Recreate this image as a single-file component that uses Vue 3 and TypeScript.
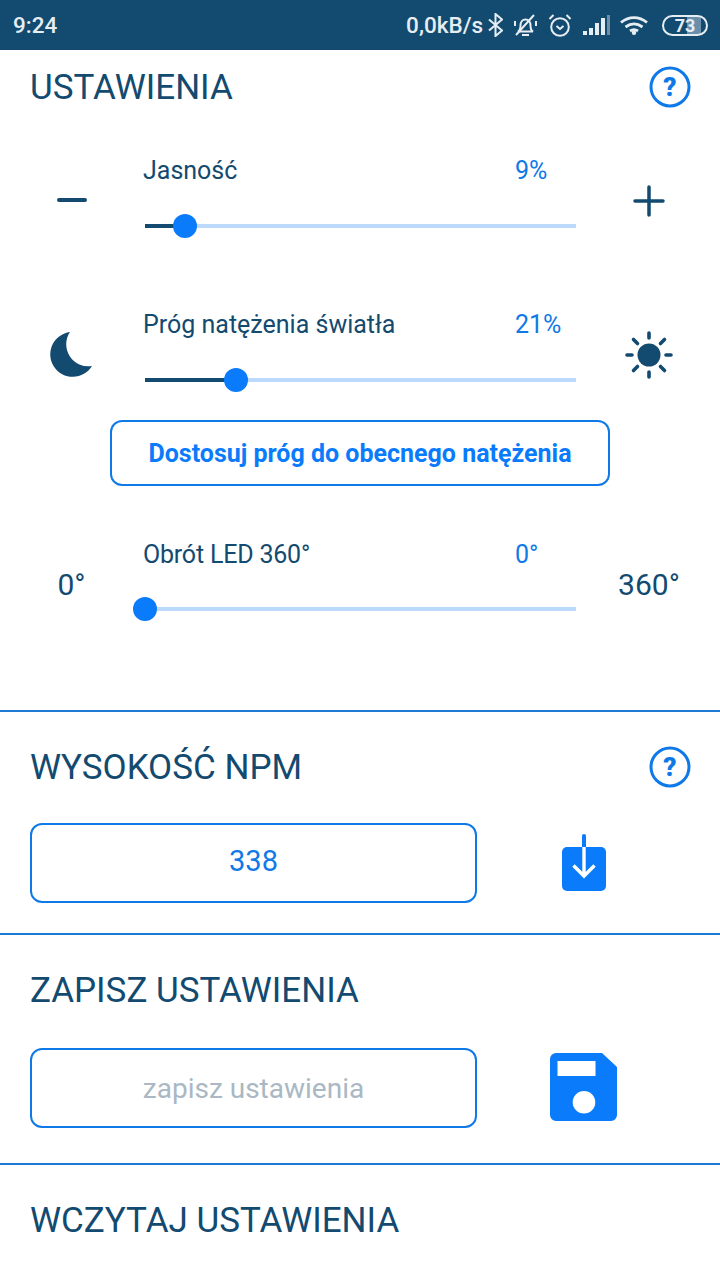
<script setup lang="ts">
interface SliderRow {
  label: string
  value: number
  display: string
  thumb: number
}

const brightness: SliderRow = { label: 'Jasność', value: 9, display: '9%', thumb: 40 }
const threshold: SliderRow = { label: 'Próg natężenia światła', value: 21, display: '21%', thumb: 91 }
const rotation: SliderRow = { label: 'Obrót LED 360°', value: 0, display: '0°', thumb: 0 }
</script>

<template>
  <div class="screen">
    <header class="status">
      <span class="time">9:24</span>
      <div class="status-right">
        <span class="speed">0,0kB/s</span>
        <svg class="bt" width="15" height="24" viewBox="0 0 15 24" fill="none" stroke="#e6eef4" stroke-width="2">
          <path d="M1 6.500l13 11-6.500 5.500V1L14 6.500 1 17.500" />
        </svg>
        <svg class="bell" width="25" height="23" viewBox="0 0 25 23" fill="none" stroke="#e6eef4" stroke-width="2">
          <path d="M5 17.500c2-1 2.500-3 2.500-6 0-3.500 2-6 5-6s5 2.500 5 6c0 3 .5 5 2.500 6z" />
          <path d="M9 21h7M3 21L21 1M2 7v5M23 7v5" />
        </svg>
        <svg class="alarm" width="24" height="24" viewBox="0 0 24 24" fill="none" stroke="#e6eef4" stroke-width="2">
          <circle cx="12" cy="14" r="8.800" />
          <path d="M8.500 13l3.500 3 3.500-3M1.500 6l4-4M22.500 6l-4-4" />
        </svg>
        <svg class="signal" width="27" height="20" viewBox="0 0 27 20">
          <path d="M0 16h4v4H0zM6 13h4v7H6zM12 8h4v12h-4zM18 3h4v17h-4z" fill="#e6eef4" />
          <path d="M24 0h3v20h-3z" fill="#6f8ea6" />
        </svg>
        <svg class="wifi" width="28" height="19" viewBox="0 0 28 19" fill="none" stroke="#e6eef4" stroke-width="2.800">
          <path d="M1 6.500c8-6.500 18-6.500 26 0M5.500 11c5.500-4 11.500-4 17 0M10 15c2.500-1.800 5.500-1.800 8 0" />
          <circle cx="14" cy="16.800" r="2.200" fill="#e6eef4" stroke="none" />
        </svg>
        <div class="battery">73</div>
      </div>
    </header>

    <section class="settings">
      <div class="title-row">
        <h2>USTAWIENIA</h2>
        <svg class="help" width="42" height="42" viewBox="0 0 42 42">
          <circle cx="21" cy="21" r="19" fill="none" stroke="#1079e8" stroke-width="3" />
          <text x="21" y="30" text-anchor="middle" class="help-mark">?</text>
        </svg>
      </div>

      <div class="slider-row r1">
        <div class="side">
          <svg class="minus" width="30" height="4" viewBox="0 0 30 4"><rect width="30" height="4" rx="2" fill="#134a70" /></svg>
        </div>
        <div class="slider">
          <div class="slider-head">
            <span>{{ brightness.label }}</span>
            <span class="val">{{ brightness.display }}</span>
          </div>
          <div class="track">
            <div class="done" :style="{ width: brightness.thumb + 'px' }"></div>
            <div class="thumb" :style="{ left: brightness.thumb + 'px' }"></div>
          </div>
        </div>
        <div class="side">
          <svg width="32" height="32" viewBox="0 0 32 32"><path d="M16 2v28M2 16h28" stroke="#134a70" stroke-width="3.500" stroke-linecap="round" /></svg>
        </div>
      </div>

      <div class="slider-row r2">
        <div class="side">
          <svg width="44" height="48" viewBox="0 0 44 48"><path d="M20 1A22.500 22.500 0 1 0 42 35 22 22 0 0 1 20 1z" fill="#134a70" /></svg>
        </div>
        <div class="slider">
          <div class="slider-head">
            <span>{{ threshold.label }}</span>
            <span class="val">{{ threshold.display }}</span>
          </div>
          <div class="track">
            <div class="done" :style="{ width: threshold.thumb + 'px' }"></div>
            <div class="thumb" :style="{ left: threshold.thumb + 'px' }"></div>
          </div>
        </div>
        <div class="side">
          <svg width="50" height="50" viewBox="0 0 50 50">
            <circle cx="25" cy="25" r="11.500" fill="#134a70" />
            <path d="M25 3v5M25 42v5M3 25h5M42 25h5M9.500 9.500l4 4M40.500 9.500l-4 4M9.500 40.500l4-4M40.500 40.500l-4-4" stroke="#134a70" stroke-width="3.600" stroke-linecap="round" />
          </svg>
        </div>
      </div>

      <button class="adjust">Dostosuj próg do obecnego natężenia</button>

      <div class="slider-row r3">
        <div class="side deg">0°</div>
        <div class="slider">
          <div class="slider-head">
            <span class="narrow">{{ rotation.label }}</span>
            <span class="val">{{ rotation.display }}</span>
          </div>
          <div class="track">
            <div class="thumb" :style="{ left: rotation.thumb + 'px' }"></div>
          </div>
        </div>
        <div class="side deg">360°</div>
      </div>
    </section>

    <section class="block npm">
      <div class="title-row">
        <h2>WYSOKOŚĆ NPM</h2>
        <svg class="help" width="42" height="42" viewBox="0 0 42 42">
          <circle cx="21" cy="21" r="19" fill="none" stroke="#1079e8" stroke-width="3" />
          <text x="21" y="30" text-anchor="middle" class="help-mark">?</text>
        </svg>
      </div>
      <div class="input-row">
        <div class="field value">338</div>
        <svg class="action" width="48" height="58" viewBox="0 0 48 58">
          <rect x="2" y="13" width="44" height="44" rx="5" fill="#0a7bfb" />
          <path d="M24 2v11" stroke="#0a7bfb" stroke-width="4" stroke-linecap="round" />
          <path d="M24 13v29M13.500 31.500L24 42l10.500-10.500" fill="none" stroke="#fff" stroke-width="3.400" />
        </svg>
      </div>
    </section>

    <section class="block save">
      <div class="title-row">
        <h2>ZAPISZ USTAWIENIA</h2>
      </div>
      <div class="input-row">
        <div class="field placeholder">zapisz ustawienia</div>
        <svg class="action" width="68" height="68" viewBox="0 0 68 68">
          <path fill-rule="evenodd" d="M6 0h46l15 14v48a6 6 0 0 1-6 6H6a6 6 0 0 1-6-6V6a6 6 0 0 1 6-6zM7.500 8v15h38V8zM34 38a11.300 11.300 0 1 0 0 22.600A11.300 11.300 0 0 0 34 38z" fill="#0a7bfb" />
        </svg>
      </div>
    </section>

    <section class="load">
      <h2>WCZYTAJ USTAWIENIA</h2>
    </section>
  </div>
</template>

<style>
html,
body {
  margin: 0;
  background: #fff;
}
</style>

<style scoped>
.screen {
  width: 720px;
  height: 1280px;
  overflow: hidden;
  background: #fff;
  font-family: Roboto, "Noto Sans", sans-serif;
  color: #134a70;
}

.status {
  height: 50px;
  background: #134a70;
  display: flex;
  align-items: center;
  justify-content: space-between;
  padding: 0 12px 0 13px;
  color: #e6eef4;
  font-size: 22.500px;
  font-weight: 500;
}

.status-right {
  display: flex;
  align-items: center;
}

.status-right svg {
  flex: none;
}

.bt {
  margin-left: 5px;
}

.bell {
  margin-left: 10px;
}

.alarm {
  margin-left: 10px;
}

.signal {
  margin-left: 11px;
}

.wifi {
  margin-left: 10px;
}

.battery {
  box-sizing: border-box;
  width: 46px;
  height: 21px;
  margin-left: 14px;
  border: 2px solid #e6eef4;
  border-radius: 11px;
  background: linear-gradient(90deg, #134a70 55%, #6a8fab 55%, #6a8fab 88%, #134a70 88%);
  text-align: center;
  font-size: 18px;
  font-weight: 700;
  line-height: 17px;
}

h2 {
  margin: 0;
  padding-top: 2px;
  font-size: 35px;
  font-weight: 400;
  line-height: 40px;
}

.title-row {
  display: flex;
  align-items: center;
  justify-content: space-between;
  padding: 0 29px 0 30px;
  height: 42px;
}

.help-mark {
  font-size: 26px;
  font-weight: 900;
  fill: #1079e8;
}

.settings {
  box-sizing: border-box;
  height: 662px;
  padding-top: 16px;
  border-bottom: 2px solid #1f7ad6;
}

.slider-row {
  display: grid;
  grid-template-columns: 143px 1fr 142px;
}

.r1 {
  margin-top: 45px;
}

.r2 {
  margin-top: 79px;
}

.r3 {
  margin-top: 51px;
}

.side {
  display: flex;
  align-items: center;
  justify-content: center;
  padding-top: 20px;
}

.minus {
  margin-bottom: 2px;
}

.deg {
  font-size: 30px;
}

.slider-head {
  display: flex;
  justify-content: space-between;
  padding-right: 13px;
  font-size: 25px;
  line-height: 36px;
  height: 36px;
}

.slider-head .narrow {
  letter-spacing: -0.2px;
}

.slider-head .val {
  width: 50px;
  color: #1079e8;
}

.track {
  position: relative;
  width: 431px;
  height: 4px;
  margin: 35px 0 0 2px;
  background: #bbdafc;
}

.r3 .track {
  margin-top: 34px;
}

.done {
  position: absolute;
  left: 0;
  top: 0;
  height: 4px;
  background: #134a70;
}

.thumb {
  position: absolute;
  top: -10px;
  width: 24px;
  height: 24px;
  margin-left: -12px;
  border-radius: 50%;
  background: #0a7bfb;
}

.adjust {
  display: block;
  width: 500px;
  height: 66px;
  margin: 38px 0 0 110px;
  padding: 0;
  background: #fff;
  border: 2px solid #1079e8;
  border-radius: 12px;
  color: #0a7bfb;
  font-family: inherit;
  font-size: 25px;
  font-weight: 700;
}

.block {
  box-sizing: border-box;
  border-bottom: 2px solid #1f7ad6;
}

.npm {
  height: 223px;
  padding-top: 34px;
}

.save {
  height: 230px;
  padding-top: 34px;
}

.input-row {
  display: flex;
  align-items: center;
  padding-left: 30px;
}

.npm .input-row {
  margin-top: 35px;
}

.save .input-row {
  margin-top: 37px;
}

.field {
  box-sizing: border-box;
  width: 447px;
  height: 80px;
  border: 2px solid #1079e8;
  border-radius: 12px;
  display: flex;
  align-items: center;
  justify-content: center;
  font-size: 28px;
  color: #1079e8;
}

.value {
  padding-bottom: 4px;
  font-size: 29px;
}

.placeholder {
  color: #a9b8c4;
}

.action {
  flex: none;
}

.npm .action {
  margin-left: 83px;
}

.save .action {
  margin-left: 73px;
  margin-bottom: 2px;
}

.load {
  padding: 34px 0 0 30px;
}
</style>
